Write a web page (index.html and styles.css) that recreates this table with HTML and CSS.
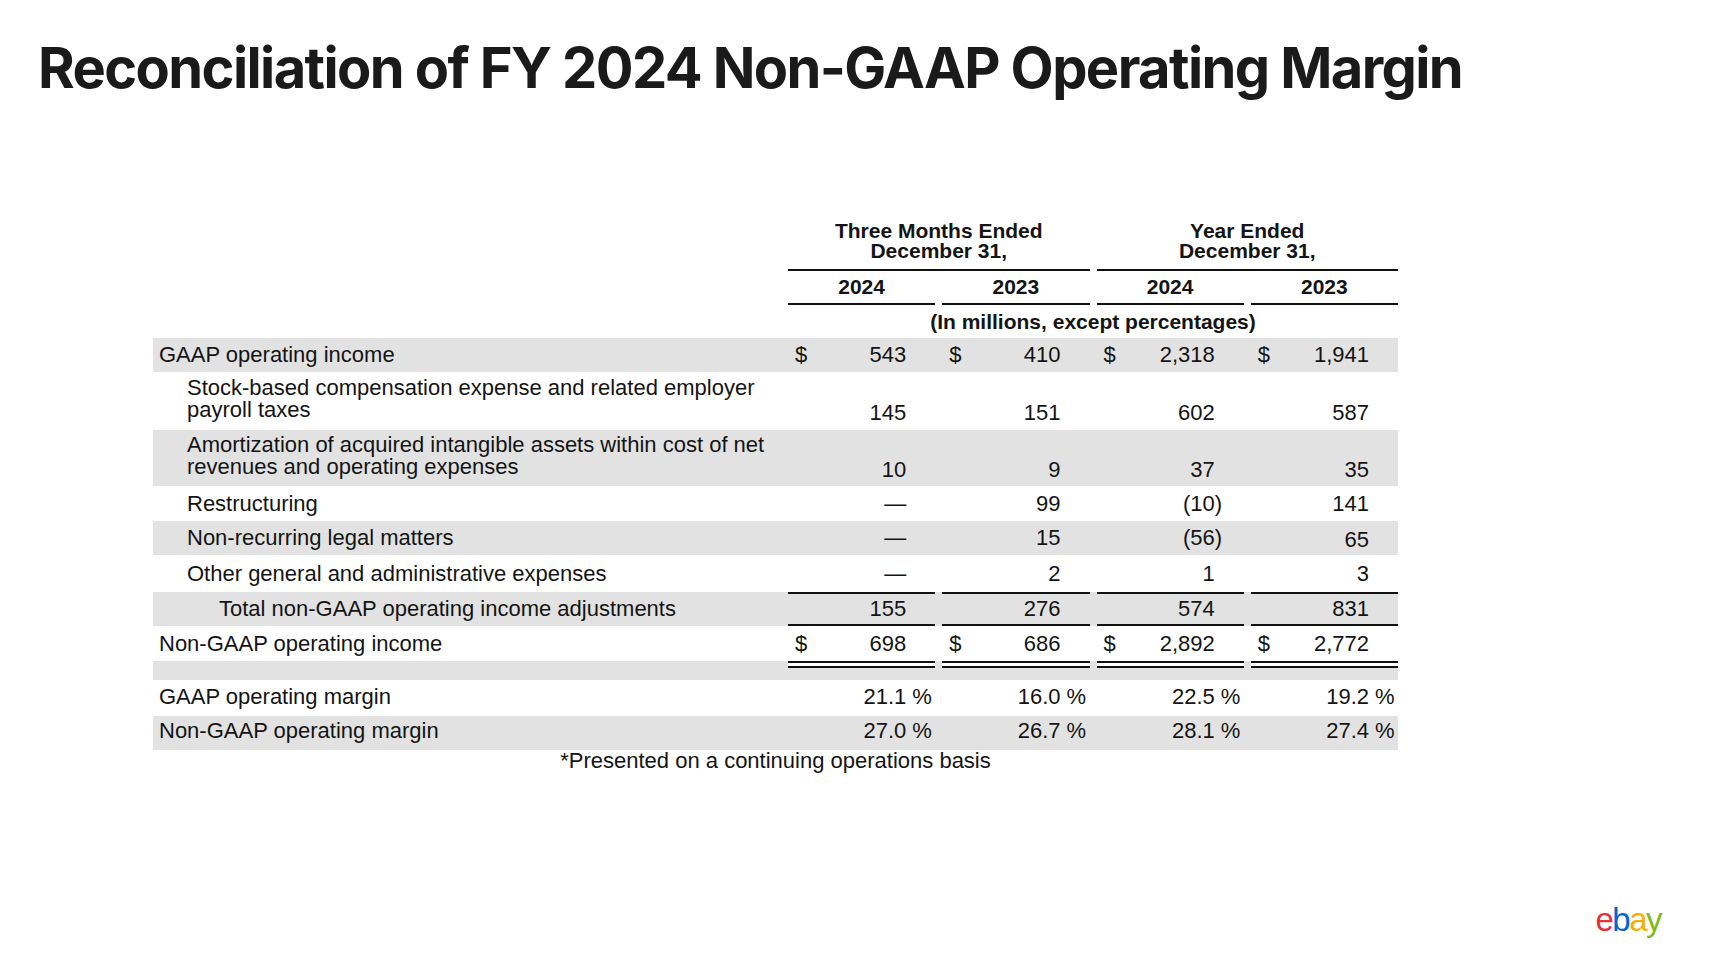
FILE: index.html
```html
<!DOCTYPE html>
<html lang="en">
<head>
<meta charset="utf-8">
<title>Reconciliation of FY 2024 Non-GAAP Operating Margin</title>
<link rel="stylesheet" href="styles.css">
</head>
<body>
<div class="slide">
  <h1 class="title">Reconciliation of FY 2024 Non-GAAP Operating Margin</h1>

  <div class="table">
    <div class="grid hrow groups">
      <div></div>
      <div class="group">Three Months Ended<br>December 31,</div>
      <div class="group">Year Ended<br>December 31,</div>
    </div>
    <div class="grid hrow years">
      <div></div>
      <div class="yr">2024</div>
      <div class="yr">2023</div>
      <div class="yr">2024</div>
      <div class="yr">2023</div>
    </div>
    <div class="grid hrow units">
      <div></div>
      <div class="unit">(In millions, except percentages)</div>
    </div>

    <div class="grid row shade r34">
      <div class="lbl">GAAP operating income</div>
      <div class="v"><span class="cur">$</span><span class="n">543</span><span class="s"></span></div>
      <div class="v"><span class="cur">$</span><span class="n">410</span><span class="s"></span></div>
      <div class="v"><span class="cur">$</span><span class="n">2,318</span><span class="s"></span></div>
      <div class="v"><span class="cur">$</span><span class="n">1,941</span><span class="s"></span></div>
    </div>

    <div class="grid row two stock">
      <div class="lbl sub">Stock-based compensation expense and related employer payroll taxes</div>
      <div class="v"><span class="n">145</span><span class="s"></span></div>
      <div class="v"><span class="n">151</span><span class="s"></span></div>
      <div class="v"><span class="n">602</span><span class="s"></span></div>
      <div class="v"><span class="n">587</span><span class="s"></span></div>
    </div>

    <div class="grid row two shade amort">
      <div class="lbl sub">Amortization of acquired intangible assets within cost of net revenues and operating expenses</div>
      <div class="v"><span class="n">10</span><span class="s"></span></div>
      <div class="v"><span class="n">9</span><span class="s"></span></div>
      <div class="v"><span class="n">37</span><span class="s"></span></div>
      <div class="v"><span class="n">35</span><span class="s"></span></div>
    </div>

    <div class="grid row r35">
      <div class="lbl sub">Restructuring</div>
      <div class="v"><span class="n">—</span><span class="s"></span></div>
      <div class="v"><span class="n">99</span><span class="s"></span></div>
      <div class="v"><span class="n">(10</span><span class="s">)</span></div>
      <div class="v"><span class="n">141</span><span class="s"></span></div>
    </div>

    <div class="grid row shade r34">
      <div class="lbl sub">Non-recurring legal matters</div>
      <div class="v"><span class="n">—</span><span class="s"></span></div>
      <div class="v"><span class="n">15</span><span class="s"></span></div>
      <div class="v"><span class="n">(56</span><span class="s">)</span></div>
      <div class="v low"><span class="n">65</span><span class="s"></span></div>
    </div>

    <div class="grid row r37">
      <div class="lbl sub">Other general and administrative expenses</div>
      <div class="v"><span class="n">—</span><span class="s"></span></div>
      <div class="v"><span class="n">2</span><span class="s"></span></div>
      <div class="v"><span class="n">1</span><span class="s"></span></div>
      <div class="v"><span class="n">3</span><span class="s"></span></div>
    </div>

    <div class="grid row shade total">
      <div class="lbl subsub">Total non-GAAP operating income adjustments</div>
      <div class="v"><span class="n">155</span><span class="s"></span></div>
      <div class="v"><span class="n">276</span><span class="s"></span></div>
      <div class="v"><span class="n">574</span><span class="s"></span></div>
      <div class="v"><span class="n">831</span><span class="s"></span></div>
    </div>

    <div class="grid row r35">
      <div class="lbl">Non-GAAP operating income</div>
      <div class="v"><span class="cur">$</span><span class="n">698</span><span class="s"></span></div>
      <div class="v"><span class="cur">$</span><span class="n">686</span><span class="s"></span></div>
      <div class="v"><span class="cur">$</span><span class="n">2,892</span><span class="s"></span></div>
      <div class="v"><span class="cur">$</span><span class="n">2,772</span><span class="s"></span></div>
    </div>

    <div class="grid row shade spacer">
      <div></div>
      <div class="dbl"></div>
      <div class="dbl"></div>
      <div class="dbl"></div>
      <div class="dbl"></div>
    </div>

    <div class="grid row margin1">
      <div class="lbl">GAAP operating margin</div>
      <div class="v"><span class="n">21.1</span><span class="s">&nbsp;%</span></div>
      <div class="v"><span class="n">16.0</span><span class="s">&nbsp;%</span></div>
      <div class="v"><span class="n">22.5</span><span class="s">&nbsp;%</span></div>
      <div class="v"><span class="n">19.2</span><span class="s">&nbsp;%</span></div>
    </div>

    <div class="grid row shade margin2">
      <div class="lbl">Non-GAAP operating margin</div>
      <div class="v"><span class="n">27.0</span><span class="s">&nbsp;%</span></div>
      <div class="v"><span class="n">26.7</span><span class="s">&nbsp;%</span></div>
      <div class="v"><span class="n">28.1</span><span class="s">&nbsp;%</span></div>
      <div class="v"><span class="n">27.4</span><span class="s">&nbsp;%</span></div>
    </div>

    <div class="footnote">*Presented on a continuing operations basis</div>
  </div>

  <div class="logo" aria-label="eBay"><span class="le">e</span><span class="lb">b</span><span class="la">a</span><span class="ly">y</span></div>
</div>
</body>
</html>
```

FILE: styles.css
```css
html, body {
  margin: 0;
  padding: 0;
  background: #ffffff;
}

.slide {
  width: 1727px;
  height: 967px;
  box-sizing: border-box;
  padding: 40px 0 0 38px;
  display: flex;
  flex-direction: column;
  background: #ffffff;
  color: #141414;
  overflow: hidden;
}

.title {
  margin: 0;
  font-family: Inter, "Noto Sans", sans-serif;
  font-weight: 700;
  font-size: 56px;
  line-height: 56px;
  letter-spacing: -1.6px;
  color: #1a1a1a;
  white-space: nowrap;
}

.table {
  margin: 125px 0 0 115px;
  width: 1245px;
  font-family: "Liberation Sans", Arial, sans-serif;
  font-size: 22px;
  color: #141414;
}

.grid {
  display: grid;
  grid-template-columns: 628px repeat(4, 1fr);
  column-gap: 7px;
}

/* header rows */
.hrow {
  font-weight: 700;
  font-size: 21px;
  text-align: center;
}

.group {
  grid-column: span 2;
  line-height: 20px;
  padding-bottom: 8px;
  border-bottom: 2px solid #111;
}

.yr {
  line-height: 32px;
  border-bottom: 2px solid #111;
}

.unit {
  grid-column: span 4;
  line-height: 33px;
}

/* body rows */
.row {
  line-height: 34px;
}

.shade {
  background: #e2e2e2;
}

.lbl {
  padding-left: 6px;
}

.lbl.sub {
  padding-left: 34px;
}

.lbl.subsub {
  padding-left: 66px;
}

.v {
  display: flex;
  padding: 0 3px 0 7px;
  white-space: nowrap;
}

.v .n {
  margin-left: auto;
}

.v .s {
  width: 26px;
  text-align: left;
}

.r34 { line-height: 34px; }
.r35 { line-height: 35px; }
.r37 { line-height: 37px; }

.two {
  line-height: 22px;
  align-items: end;
}

.two .lbl {
  margin-bottom: 3px;
}

.stock {
  padding: 5px 0 6px;
}

.amort {
  padding: 4px 0 5px;
}

.low .n,
.low .s {
  position: relative;
  top: 2px;
}

.total {
  line-height: 30px;
}

.total .lbl {
  padding-top: 2px;
  padding-bottom: 2px;
}

.total .v {
  border-top: 2px solid #111;
  border-bottom: 2px solid #111;
}

.spacer {
  height: 19px;
}

.dbl {
  border-top: 7px double #111;
  background: linear-gradient(#ffffff 0 7px, transparent 7px);
  background-origin: border-box;
}

.margin1 {
  padding-bottom: 2px;
}

.margin2 {
  line-height: 30px;
  padding-bottom: 4px;
}

.footnote {
  text-align: center;
  line-height: 22px;
}

/* logo */
.logo {
  margin: auto 66px 31px 0;
  align-self: flex-end;
  font-family: "Liberation Sans", Arial, sans-serif;
  font-size: 33px;
  line-height: 33px;
  letter-spacing: -1.5px;
}

.le { color: #e53238; }
.lb { color: #0064d2; }
.la { color: #f5af02; }
.ly { color: #86b817; }
```
